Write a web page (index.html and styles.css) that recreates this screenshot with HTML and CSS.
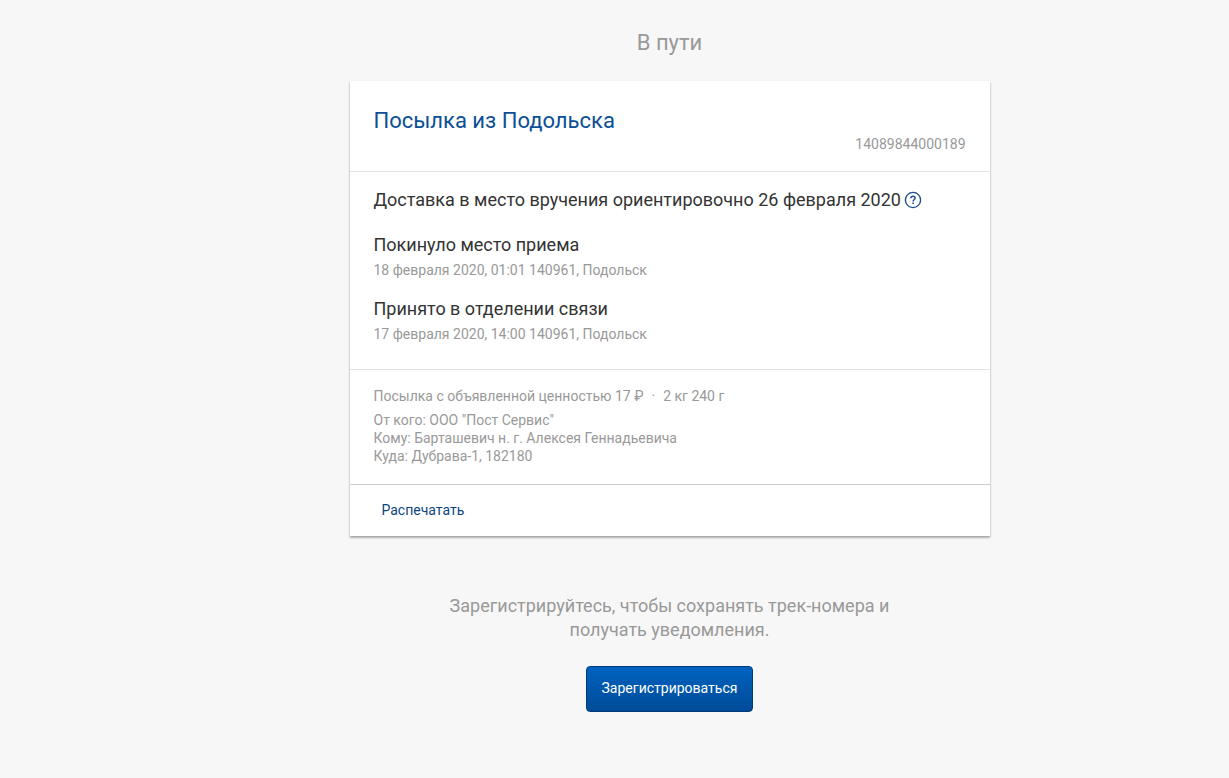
FILE: index.html
```html
<!DOCTYPE html>
<html lang="ru">
<head>
<meta charset="utf-8">
<meta name="viewport" content="width=device-width, initial-scale=1">
<title>Посылка из Подольска</title>
<link rel="stylesheet" href="styles.css">
</head>
<body>
<main class="page">
  <h1 class="status">В пути</h1>
  <article class="card">
    <header class="card-head">
      <h2 class="card-title">Посылка из Подольска</h2>
      <p class="track">14089844000189</p>
    </header>
    <section class="history">
      <div class="delivery">
        <p class="event">Доставка в место вручения ориентировочно 26 февраля 2020</p>
        <button class="help" type="button" aria-label="Подробнее о сроке доставки">
          <svg class="help-icon" viewBox="0 0 18 18" fill="none" stroke="currentColor" aria-hidden="true">
            <circle cx="9" cy="9" r="7.6" stroke-width="1.4"/>
            <path d="M6.9 7.3C6.9 6 7.8 5.3 9 5.3s2.1.7 2.1 1.9c0 1.5-2 1.6-2 3.2" stroke-width="1.5"/>
            <path d="M9.1 11.5v1.5" stroke-width="1.6"/>
          </svg>
        </button>
      </div>
      <ul class="events">
        <li>
          <p class="event">Покинуло место приема</p>
          <p class="note">18 февраля 2020, 01:01 140961, Подольск</p>
        </li>
        <li>
          <p class="event">Принято в отделении связи</p>
          <p class="note">17 февраля 2020, 14:00 140961, Подольск</p>
        </li>
      </ul>
    </section>
    <section class="details">
      <p class="summary">Посылка с объявленной ценностью 17 ₽<span class="dot">·</span>2 кг 240 г</p>
      <p>От кого: ООО "Пост Сервис"</p>
      <p>Кому: Барташевич н. г. Алексея Геннадьевича</p>
      <p>Куда: Дубрава-1, 182180</p>
    </section>
    <footer class="actions">
      <button class="print" type="button">Распечатать</button>
    </footer>
  </article>
  <section class="signup">
    <p class="signup-text">Зарегистрируйтесь, чтобы сохранять трек-номера и получать уведомления.</p>
    <button class="register" type="button">Зарегистрироваться</button>
  </section>
</main>
</body>
</html>
```
FILE: styles.css
```css
* {
  box-sizing: border-box;
}

body {
  margin: 0;
  background: #f7f7f7;
  color: #333;
  font: 14px/18px Roboto, "Liberation Sans", sans-serif;
}

h1, h2, p, ul {
  margin: 0;
  padding: 0;
  font-weight: 400;
}

button {
  font: inherit;
  cursor: pointer;
}

.page {
  display: flex;
  flex-direction: column;
  align-items: center;
  padding: 29px 0 64px 110px;
}

.status {
  margin-bottom: 24px;
  color: #999;
  font-size: 22px;
  line-height: 28px;
}

.card {
  width: 100%;
  max-width: 640px;
  background: #fff;
  box-shadow: 0 1px 2px rgba(0, 0, 0, .16), 0 2px 2px rgba(0, 0, 0, .24);
}

.card-head {
  padding: 26px 24px 18px;
  border-bottom: 1px solid #e2e2e2;
}

.card-title {
  color: #0b4f94;
  font-size: 22px;
  line-height: 28px;
}

.track {
  color: #999;
  text-align: right;
}

.history {
  padding: 16px 24px 27px;
  border-bottom: 1px solid #e2e2e2;
}

.delivery {
  display: flex;
  align-items: center;
  gap: 3px;
  margin-bottom: 21px;
}

.event {
  font-size: 18px;
  line-height: 24px;
}

.help {
  display: flex;
  padding: 0;
  border: 0;
  background: none;
  color: #1d4f8f;
}

.help-icon {
  width: 18px;
  height: 18px;
}

.events {
  display: grid;
  gap: 19px;
  list-style: none;
}

.note {
  margin-top: 5px;
  color: #999;
  line-height: 16px;
}

.details {
  padding: 17px 24px 19px;
  border-bottom: 1px solid #ccc;
  color: #999;
}

.summary {
  margin-bottom: 6px;
}

.dot {
  margin: 0 8px;
}

.actions {
  padding: 8px 24px 9px;
}

.print {
  padding: 8px;
  border: 0;
  background: none;
  color: #0b4580;
}

.signup {
  display: flex;
  flex-direction: column;
  align-items: center;
  gap: 24px;
  margin-top: 58px;
}

.signup-text {
  max-width: 480px;
  color: #999;
  font-size: 18px;
  line-height: 24px;
  text-align: center;
}

.register {
  padding: 12px 15px 14px;
  border: 1px solid #003a78;
  border-radius: 4px;
  background: linear-gradient(#0062c0, #004b98);
  color: #fff;
}
```
